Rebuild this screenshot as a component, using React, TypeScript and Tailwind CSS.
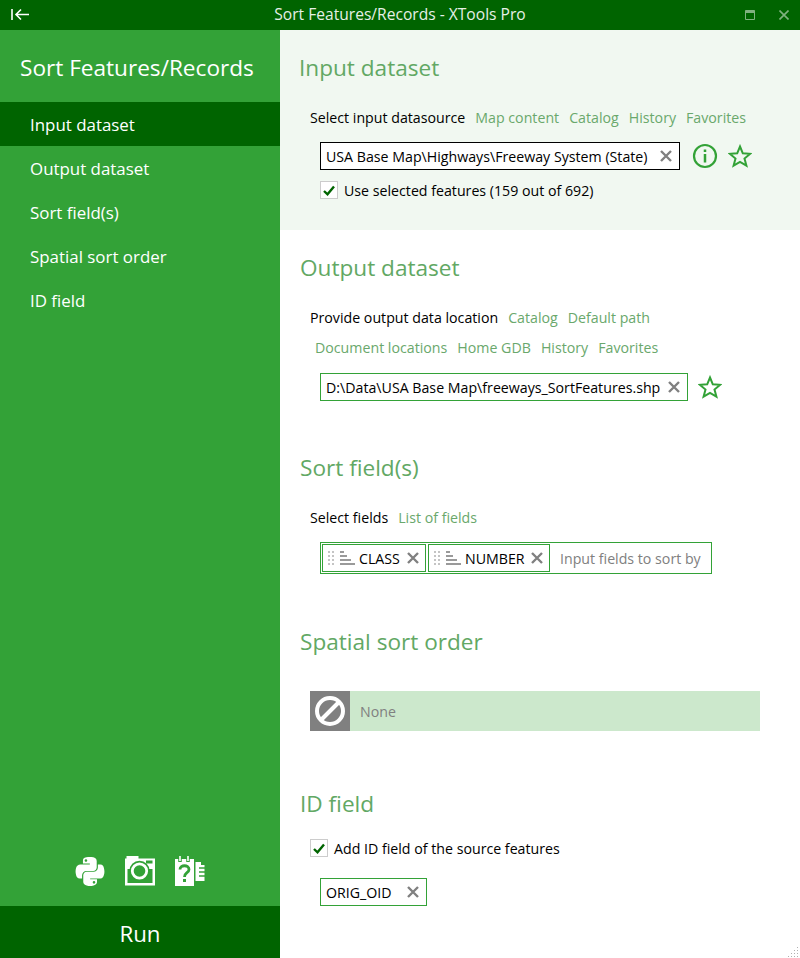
import type { ReactNode } from 'react';
import { FaPython } from 'react-icons/fa';

const navItems = ['Input dataset', 'Output dataset', 'Sort field(s)', 'Spatial sort order', 'ID field'];

function Cross({ className = 'text-[#808080]' }: { className?: string }) {
  return (
    <svg width="12" height="12" viewBox="0 0 12 12" className={`shrink-0 ${className}`}>
      <path d="M1 1 L11 11 M11 1 L1 11" stroke="currentColor" strokeWidth="2.4" fill="none" />
    </svg>
  );
}

function Star() {
  return (
    <svg width="24" height="24" viewBox="0 0 24 24" className="shrink-0">
      <path
        d="M12 2.5 L14.8 9.3 L22.2 9.8 L16.5 14.5 L18.4 21.6 L12 17.8 L5.6 21.6 L7.5 14.5 L1.8 9.8 L9.2 9.3 Z"
        fill="none"
        stroke="#33a237"
        strokeWidth="2"
      />
    </svg>
  );
}

function Info() {
  return (
    <svg width="26" height="26" viewBox="0 0 26 26" className="shrink-0">
      <circle cx="13" cy="13" r="11" fill="none" stroke="#33a237" strokeWidth="2.2" />
      <rect x="11.75" y="6.5" width="2.5" height="2.5" fill="#33a237" />
      <rect x="11.75" y="11" width="2.5" height="8.5" fill="#33a237" />
    </svg>
  );
}

function Check({ label }: { label: string }) {
  return (
    <div className="flex h-[18px] items-center">
      <div className="flex h-[18px] w-[18px] items-center justify-center border border-[#cccccc] bg-white">
        <svg width="12" height="11" viewBox="0 0 12 11">
          <path d="M1 6 L4.5 9.3 L11 1.5" fill="none" stroke="#006400" strokeWidth="2.4" />
        </svg>
      </div>
      <span className="ml-[6px] mt-[2px] text-black">{label}</span>
    </div>
  );
}

function Heading({ children, className = '' }: { children: ReactNode; className?: string }) {
  return <h2 className={`h-[28px] text-[22.6px] leading-[28px] text-[#62a864] ${className}`}>{children}</h2>;
}

function LinkRow({ label, links, className = '' }: { label?: string; links: string[]; className?: string }) {
  return (
    <div className={`flex h-[30px] items-center gap-[10px] ${className}`}>
      {label ? <span className="mt-[2px] text-black">{label}</span> : null}
      {links.map((l) => (
        <span key={l} className="mt-[2px] text-[#6aa86c]">
          {l}
        </span>
      ))}
    </div>
  );
}

function FieldTag({ name, width }: { name: string; width: string }) {
  return (
    <div className={`flex h-[28px] items-center border border-[#33a237] pl-[4px] pr-[6px] ${width}`}>
      <svg width="8" height="16" viewBox="0 0 8 16" className="shrink-0 text-[#c4c4c4]">
        <path d="M1 1h2v2H1zM5 1h2v2H5zM1 5h2v2H1zM5 5h2v2H5zM1 9h2v2H1zM5 9h2v2H5zM1 13h2v2H1zM5 13h2v2H5z" fill="currentColor" />
      </svg>
      <svg width="16" height="14" viewBox="0 0 16 14" className="ml-[4px] shrink-0">
        <path d="M1 0h4v2H1zM1 4h7v2H1zM1 8h11v2H1zM1 12h15v2H1z" fill="#9a9a9a" />
      </svg>
      <span className="ml-[4px] mt-[2px] text-black">{name}</span>
      <span className="ml-auto">
        <Cross />
      </span>
    </div>
  );
}

function CameraIcon() {
  return (
    <svg width="30" height="30" viewBox="0 0 30 30">
      <rect x="1.5" y="0" width="12" height="3" fill="#ffffff" />
      <rect x="0" y="2.5" width="30" height="27" fill="#ffffff" />
      <rect x="21" y="4.5" width="6.5" height="3" fill="#33a237" />
      <rect x="2.5" y="13" width="25" height="14" fill="#33a237" />
      <circle cx="14.5" cy="15" r="10.2" fill="#33a237" />
      <circle cx="14.5" cy="15" r="8.6" fill="#ffffff" />
      <circle cx="14.5" cy="15" r="5.8" fill="#33a237" />
    </svg>
  );
}

function HelpBookIcon() {
  return (
    <svg width="30" height="30" viewBox="0 0 30 30">
      <path d="M0 3 H19 V30 H0 Z" fill="#ffffff" />
      <path d="M5 0 V6 M13 0 V6" stroke="#33a237" strokeWidth="3.5" fill="none" />
      <path d="M5 0 V5 M13 0 V5" stroke="#ffffff" strokeWidth="1.6" fill="none" />
      <path d="M20.5 6 H26 V9 H29.5 V25 H20.5 Z" fill="#ffffff" />
      <path d="M24 12 H30 M24 16 H30 M24 20 H30" stroke="#33a237" strokeWidth="1.5" fill="none" />
      <path d="M5 13.5 C5 8.5 14 8.5 14 13.5 C14 17 9.5 16.5 9.5 21" fill="none" stroke="#33a237" strokeWidth="2.8" />
      <rect x="8" y="23" width="3" height="3" fill="#33a237" />
    </svg>
  );
}

export default function App() {
  return (
    <div className="flex h-[958px] w-[800px] flex-col overflow-hidden bg-white font-['Open_Sans',sans-serif] text-[14.2px]">
      <header className="relative flex h-[30px] shrink-0 items-center bg-[#006400] text-white">
        <svg width="20" height="14" viewBox="0 0 20 14" className="ml-[10px]">
          <path d="M2 1 V12 M19 6.5 H6 M11 1.5 L6 6.5 L11 11.5" stroke="#ffffff" strokeWidth="1.6" fill="none" />
        </svg>
        <span className="absolute inset-x-0 text-center text-[15.6px] text-[#e6f0e6]">Sort Features/Records - XTools Pro</span>
        <div className="ml-auto mr-[11px] flex items-center gap-[24px] text-[#80b180]">
          <svg width="10" height="10" viewBox="0 0 10 10">
            <path d="M0.5 0.5 H9.5 V9.5 H0.5 Z" fill="none" stroke="currentColor" />
            <rect x="0.5" y="0.5" width="9" height="2.5" fill="currentColor" />
          </svg>
          <svg width="10" height="10" viewBox="0 0 10 10">
            <path d="M0.5 0.5 L9.5 9.5 M9.5 0.5 L0.5 9.5" stroke="currentColor" strokeWidth="1.6" fill="none" />
          </svg>
        </div>
      </header>

      <div className="flex min-h-0 flex-1">
        <aside className="flex w-[280px] shrink-0 flex-col bg-[#33a237] text-white">
          <div className="flex h-[72px] items-center pl-[20px] pt-[4px] text-[22.6px]">Sort Features/Records</div>
          <nav className="text-[16.9px]">
            {navItems.map((item, i) => (
              <div key={item} className={`flex h-[44px] items-center pl-[30px] pt-[2px] ${i === 0 ? 'bg-[#006400]' : ''}`}>
                {item}
              </div>
            ))}
          </nav>
          <div className="mt-auto mb-[20px] flex h-[30px] items-center justify-center gap-[20px]">
            <div className="flex w-[30px] justify-center">
              <FaPython size={33} color="#ffffff" />
            </div>
            <CameraIcon />
            <HelpBookIcon />
          </div>
          <div className="flex h-[52px] items-center justify-center bg-[#006400] pt-[3px] text-[22.3px]">Run</div>
        </aside>

        <main className="relative min-w-0 flex-1">
          <section className="h-[200px] bg-[#f1f8f1] pl-[19px] pt-[24px]">
            <Heading>Input dataset</Heading>
            <LinkRow className="ml-[11px] mt-[20px]" label="Select input datasource" links={['Map content', 'Catalog', 'History', 'Favorites']} />
            <div className="ml-[21px] mt-[10px] flex items-center">
              <div className="flex h-[28px] w-[360px] items-center justify-between border border-black bg-white pl-[5px] pr-[7px] text-black">
                <span className="mt-[2px]">USA Base Map\Highways\Freeway System (State)</span>
                <Cross />
              </div>
              <span className="ml-[12px]">
                <Info />
              </span>
              <span className="ml-[10px]">
                <Star />
              </span>
            </div>
            <div className="ml-[21px] mt-[11px]">
              <Check label="Use selected features (159 out of 692)" />
            </div>
          </section>

          <section className="h-[200px] pl-[20px] pt-[24px]">
            <Heading>Output dataset</Heading>
            <LinkRow className="ml-[10px] mt-[20px]" label="Provide output data location" links={['Catalog', 'Default path']} />
            <LinkRow className="ml-[15px]" links={['Document locations', 'Home GDB', 'History', 'Favorites']} />
            <div className="ml-[20px] mt-[11px] flex items-center">
              <div className="flex h-[28px] w-[368px] items-center justify-between border border-[#33a237] pl-[5px] pr-[7px] text-black">
                <span className="mt-[2px]">D:\Data\USA Base Map\freeways_SortFeatures.shp</span>
                <Cross />
              </div>
              <span className="ml-[10px]">
                <Star />
              </span>
            </div>
          </section>

          <section className="h-[174px] pl-[20px] pt-[24px]">
            <Heading>Sort field(s)</Heading>
            <LinkRow className="ml-[10px] mt-[20px]" label="Select fields" links={['List of fields']} />
            <div className="ml-[20px] mt-[10px] flex h-[32px] w-[392px] items-center gap-[2px] border border-[#33a237] pl-[1px]">
              <FieldTag name="CLASS" width="w-[104px]" />
              <FieldTag name="NUMBER" width="w-[122px]" />
              <span className="ml-[8px] mt-[2px] text-[#808080]">Input fields to sort by</span>
            </div>
          </section>

          <section className="h-[162px] pl-[20px] pt-[24px]">
            <Heading>Spatial sort order</Heading>
            <div className="ml-[10px] mt-[35px] flex h-[40px] w-[450px] items-center bg-[#cce8cc]">
              <div className="flex h-[40px] w-[40px] items-center justify-center bg-[#808080]">
                <svg width="32" height="32" viewBox="0 0 32 32">
                  <circle cx="16" cy="16" r="13" fill="none" stroke="#ffffff" strokeWidth="4" />
                  <path d="M7 25 L25 7" stroke="#ffffff" strokeWidth="4" fill="none" />
                </svg>
              </div>
              <span className="ml-[10px] mt-[2px] text-[#808080]">None</span>
            </div>
          </section>

          <section className="pl-[20px] pt-[24px]">
            <Heading>ID field</Heading>
            <div className="ml-[10px] mt-[21px]">
              <Check label="Add ID field of the source features" />
            </div>
            <div className="ml-[20px] mt-[21px] flex h-[28px] w-[107px] items-center justify-between border border-[#33a237] pl-[5px] pr-[7px] text-black">
              <span className="mt-[2px]">ORIG_OID</span>
              <Cross />
            </div>
          </section>

          <svg width="12" height="12" viewBox="0 0 12 12" className="absolute bottom-[1px] right-[1px] text-[#b0b0b0]">
            <path d="M10 2h1v1h-1zM7 5h1v1H7zM10 5h1v1h-1zM4 8h1v1H4zM7 8h1v1H7zM10 8h1v1h-1zM1 11h1v1H1zM4 11h1v1H4zM7 11h1v1H7zM10 11h1v1h-1z" fill="currentColor" />
          </svg>
        </main>
      </div>
    </div>
  );
}
